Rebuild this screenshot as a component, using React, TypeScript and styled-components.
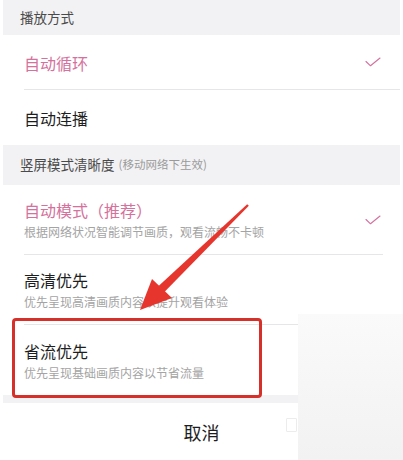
import React from 'react'
import styled, { createGlobalStyle } from 'styled-components'

const GlobalStyle = createGlobalStyle`
  html, body {
    margin: 0;
    padding: 0;
    background: #ffffff;
  }
  body {
    font-family: "Noto Sans CJK SC", "Noto Sans", "Liberation Sans", sans-serif;
    -webkit-font-smoothing: antialiased;
  }
`

const PINK = '#d4719c'

type OptionData = {
  title: string
  desc?: string
  checked?: boolean
}

const playModes: OptionData[] = [
  { title: '自动循环', checked: true },
  { title: '自动连播' },
]

const qualityModes: OptionData[] = [
  { title: '自动模式（推荐）', desc: '根据网络状况智能调节画质，观看流畅不卡顿', checked: true },
  { title: '高清优先', desc: '优先呈现高清画质内容以提升观看体验' },
  { title: '省流优先', desc: '优先呈现基础画质内容以节省流量' },
]

const Check: React.FC = () => (
  <svg width="16" height="10" viewBox="0 0 16 10" fill="none">
    <path d="M1 4.5 L5.5 8.8 L15 1" stroke={PINK} strokeWidth="1.1" strokeLinecap="round" strokeLinejoin="round" />
  </svg>
)

const Arrow: React.FC = () => (
  <ArrowLayer width="403" height="460" viewBox="0 0 403 460">
    <polygon
      points="248.8,205.8 247.2,204.2 158.6,286 164.4,292"
      fill="#e5352d"
    />
    <polygon points="140,310 152,279 172,298" fill="#e5352d" />
  </ArrowLayer>
)

const OptionRow: React.FC<{ item: OptionData; last?: boolean; lineEnd?: number }> = ({ item, last, lineEnd = 0 }) => (
  <Row>
    <RowInner $tall={!!item.desc} $divider={!last} $lineEnd={lineEnd}>
      <Texts>
        <Title $active={!!item.checked}>{item.title}</Title>
        {item.desc && <Desc>{item.desc}</Desc>}
      </Texts>
      {item.checked && <CheckSlot><Check /></CheckSlot>}
    </RowInner>
  </Row>
)

export default function App() {
  return (
    <Page>
      <GlobalStyle />
      <Sheet>
        <SectionHeader $h={35}>播放方式</SectionHeader>
        {playModes.map((m, i) => (
          <OptionRow key={m.title} item={m} last={i === playModes.length - 1} />
        ))}
        <SectionHeader $h={40}>
          竖屏模式清晰度<HeaderNote>(移动网络下生效)</HeaderNote>
        </SectionHeader>
        {qualityModes.map((m, i) => (
          <OptionRow key={m.title} item={m} last={i === qualityModes.length - 1} lineEnd={17} />
        ))}
        <Gap />
        <CancelBar>取消</CancelBar>
      </Sheet>
      <FadePanel>
        <Watermark />
      </FadePanel>
      <Highlight />
      <Arrow />
    </Page>
  )
}

const Page = styled.div`
  position: relative;
  width: 403px;
  height: 460px;
  overflow: hidden;
  background: #ffffff;
`

const Sheet = styled.div`
  display: flex;
  flex-direction: column;
  padding: 0 3px;
`

const SectionHeader = styled.div<{ $h: number }>`
  display: flex;
  align-items: center;
  height: ${p => p.$h}px;
  padding-left: 17px;
  background: #f2f2f4;
  color: #4a4a4a;
  font-size: 13.5px;
  line-height: 1;
`

const HeaderNote = styled.span`
  margin-left: 4px;
  color: #9a9a9a;
  font-size: 11.5px;
`

const Row = styled.div`
  display: flex;
  background: #ffffff;
  padding-left: 21px;
`

const RowInner = styled.div<{ $tall: boolean; $divider: boolean; $lineEnd: number }>`
  flex: 1;
  display: flex;
  align-items: center;
  justify-content: space-between;
  height: ${p => (p.$tall ? 70 : 55)}px;
  box-sizing: border-box;
  margin-right: ${p => p.$lineEnd}px;
  padding-right: ${p => 19 - p.$lineEnd}px;
  border-bottom: ${p => (p.$divider ? '1px solid #e6e6e8' : 'none')};
`

const Texts = styled.div`
  display: flex;
  flex-direction: column;
  gap: 6px;
  padding-top: 1px;
`

const Title = styled.div<{ $active: boolean }>`
  font-size: 16px;
  line-height: 18px;
  color: ${p => (p.$active ? PINK : '#1e1e1e')};
`

const Desc = styled.div`
  font-size: 12px;
  line-height: 14px;
  color: #a4a4a4;
`

const CheckSlot = styled.div`
  display: flex;
  align-items: center;
`

const Gap = styled.div`
  height: 8px;
  background: #f2f2f4;
`

const CancelBar = styled.div`
  display: flex;
  align-items: center;
  justify-content: center;
  height: 57px;
  font-size: 18px;
  color: #1e1e1e;
  background: #ffffff;
`

const FadePanel = styled.div`
  position: absolute;
  left: 298px;
  top: 314px;
  right: 0;
  bottom: 0;
  background: linear-gradient(180deg, #fafafa 0%, #f5f5f5 60%, #f2f2f2 100%);
`

const Watermark = styled.div`
  position: absolute;
  left: -12px;
  top: 104px;
  width: 9px;
  height: 12px;
  border: 1px solid #ececec;
  border-radius: 1px;
`

const Highlight = styled.div`
  position: absolute;
  left: 12px;
  top: 318px;
  width: 250px;
  height: 80px;
  box-sizing: border-box;
  border: 3px solid #d6302a;
  border-radius: 4px;
`

const ArrowLayer = styled.svg`
  position: absolute;
  left: 0;
  top: 0;
  pointer-events: none;
`
